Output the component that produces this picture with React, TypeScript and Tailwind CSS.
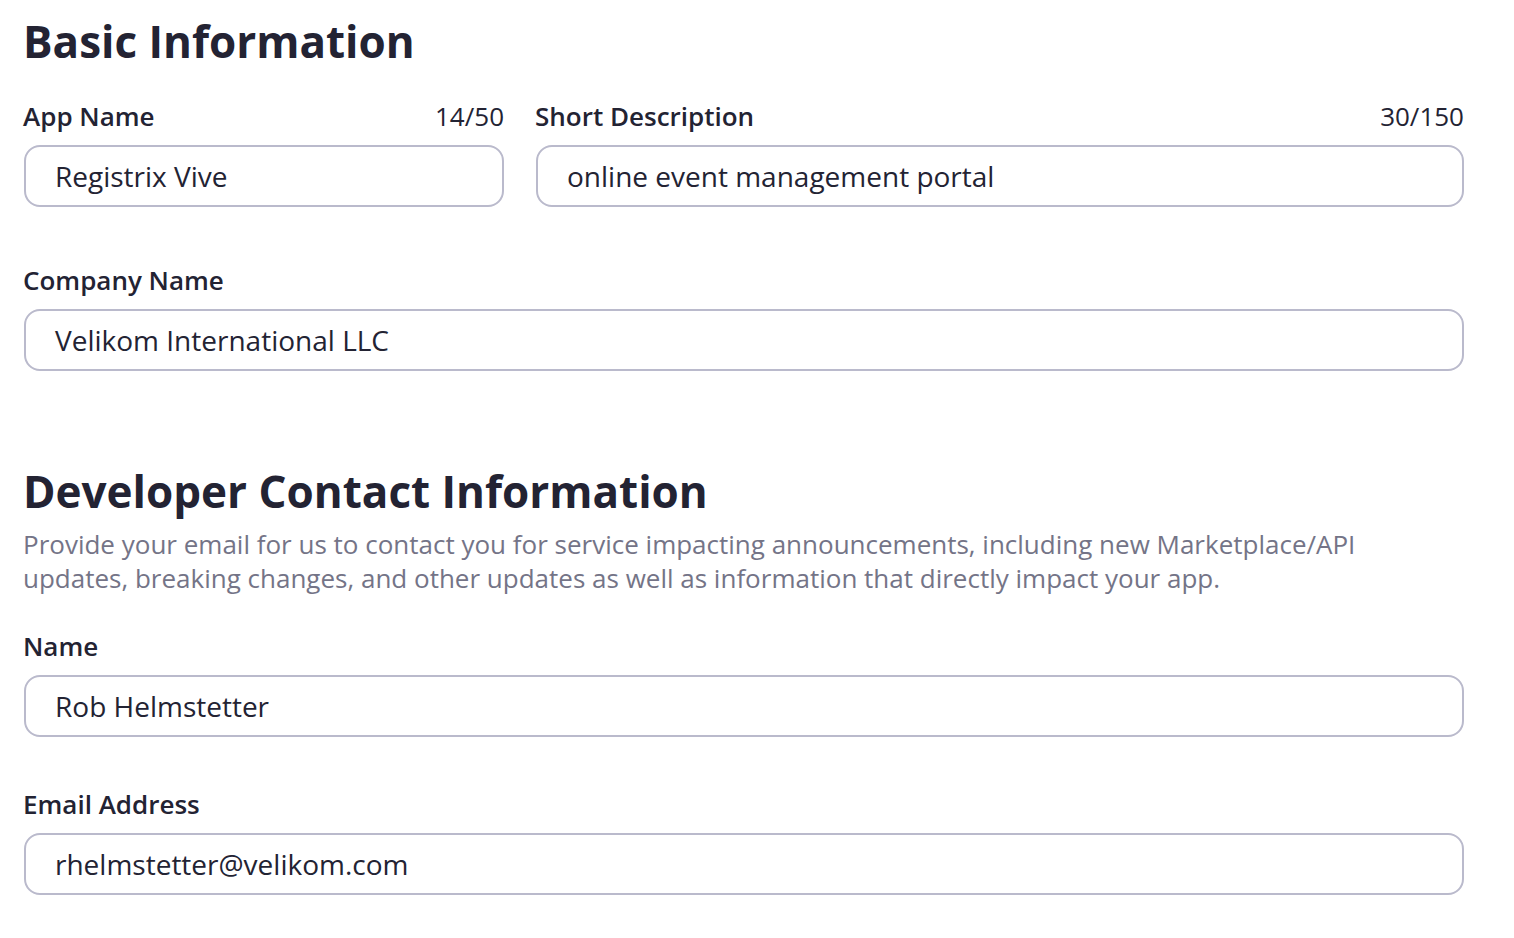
const font = { fontFamily: '"Open Sans", "Noto Sans", sans-serif' };

type FieldProps = {
  label: string;
  value: string;
  counter?: string;
  className?: string;
};

const Field: React.FC<FieldProps> = ({ label, value, counter, className }) => (
  <div className={`flex flex-col ${className ?? ""}`}>
    <div className="flex items-center justify-between h-[34px]">
      <span className="text-[26px] font-semibold text-[#232333] -ml-[1px]">{label}</span>
      {counter && <span className="text-[26px] text-[#232333]">{counter}</span>}
    </div>
    <div className="mt-[12px] h-[62px] flex items-center border-2 border-[#babacc] rounded-[16px] pl-[29px] bg-white">
      <span className="text-[28px] text-[#232333]">{value}</span>
    </div>
  </div>
);

export default function App() {
  return (
    <div className="min-h-screen bg-white" style={font}>
      <div className="w-[1440px] ml-[24px] pt-[15px]">
        <h2 className="text-[44px] leading-[52px] font-bold text-[#232333] -ml-[1px]">Basic Information</h2>

        <div className="flex gap-[32px] mt-[32px]">
          <Field label="App Name" counter="14/50" value="Registrix Vive" className="w-[480px]" />
          <Field label="Short Description" counter="30/150" value="online event management portal" className="flex-1" />
        </div>

        <Field label="Company Name" value="Velikom International LLC" className="mt-[56px]" />

        <h2 className="mt-[94px] text-[44px] leading-[52px] font-bold text-[#232333] -ml-[1px]">
          Developer Contact Information
        </h2>
        <p className="mt-[10px] text-[26px] leading-[34px] text-[#747487] max-w-[1360px] -ml-[1px]">
          Provide your email for us to contact you for service impacting announcements, including new Marketplace/API
          updates, breaking changes, and other updates as well as information that directly impact your app.
        </p>

        <Field label="Name" value="Rob Helmstetter" className="mt-[34px]" />
        <Field label="Email Address" value="rhelmstetter@velikom.com" className="mt-[50px]" />
      </div>
    </div>
  );
}
